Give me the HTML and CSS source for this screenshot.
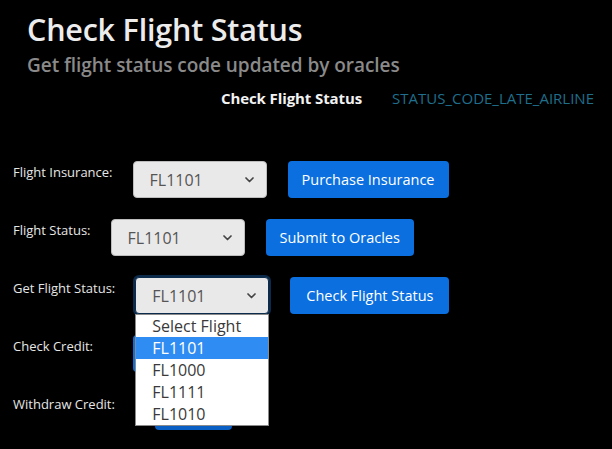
FILE: index.html
```html
<!DOCTYPE html>
<html lang="en">
<head>
<meta charset="utf-8">
<title>Check Flight Status</title>
<link rel="stylesheet" href="styles.css">
</head>
<body>
<div class="page">
  <h1 class="title">Check Flight Status</h1>
  <h2 class="subtitle">Get flight status code updated by oracles</h2>
  <div class="status-line">
    <span class="status-label">Check Flight Status</span>
    <span class="status-code">STATUS_CODE_LATE_AIRLINE</span>
  </div>
  <div class="form">
    <div class="row">
      <span class="label">Flight Insurance:</span>
      <div class="select"><span class="select-text">FL1101</span><svg class="chev" width="9" height="6" viewBox="0 0 9 6"><path d="M1 1 L4.5 4.5 L8 1" fill="none" stroke="#444" stroke-width="1.7" stroke-linecap="round" stroke-linejoin="round"/></svg></div>
      <button class="btn">Purchase Insurance</button>
    </div>
    <div class="row">
      <span class="label">Flight Status:</span>
      <div class="select"><span class="select-text">FL1101</span><svg class="chev" width="9" height="6" viewBox="0 0 9 6"><path d="M1 1 L4.5 4.5 L8 1" fill="none" stroke="#444" stroke-width="1.7" stroke-linecap="round" stroke-linejoin="round"/></svg></div>
      <button class="btn">Submit to Oracles</button>
    </div>
    <div class="row">
      <span class="label">Get Flight Status:</span>
      <div class="select-wrap">
        <div class="select focused"><span class="select-text">FL1101</span><svg class="chev" width="9" height="6" viewBox="0 0 9 6"><path d="M1 1 L4.5 4.5 L8 1" fill="none" stroke="#444" stroke-width="1.7" stroke-linecap="round" stroke-linejoin="round"/></svg></div>
        <ul class="dropdown">
          <li class="opt">Select Flight</li>
          <li class="opt active">FL1101</li>
          <li class="opt">FL1000</li>
          <li class="opt">FL1111</li>
          <li class="opt">FL1010</li>
        </ul>
      </div>
      <button class="btn btn-wide">Check Flight Status</button>
    </div>
    <div class="row">
      <span class="label">Check Credit:</span>
      <button class="btn btn-spaced btn-credit" aria-label="Check Credit"></button>
    </div>
    <div class="row">
      <span class="label">Withdraw Credit:</span>
      <button class="btn btn-spaced btn-withdraw" aria-label="Withdraw Credit"></button>
    </div>
  </div>
</div>
</body>
</html>
```

FILE: styles.css
```css
* { box-sizing: border-box; }
html, body {
  margin: 0;
  padding: 0;
  background: #000;
}
body {
  font-family: "Open Sans", "Noto Sans", "Liberation Sans", sans-serif;
  color: #e0e0e0;
}
.page {
  padding: 9px 18px 0 27px;
}
.title {
  margin: 0;
  font-size: 30.5px;
  line-height: 40px;
  font-weight: 600;
  color: #ececec;
  letter-spacing: -0.2px;
}
.subtitle {
  margin: 4px 0 0 0;
  font-size: 19px;
  line-height: 24px;
  font-weight: 600;
  color: #8a8a8a;
  letter-spacing: -0.05px;
}
.status-line {
  display: flex;
  justify-content: flex-end;
  gap: 30px;
  margin-top: 11px;
  font-size: 15px;
  line-height: 20px;
}
.status-label {
  font-weight: 700;
  color: #f2f2f2;
  letter-spacing: -0.1px;
}
.status-code {
  color: #1f6e8c;
}
.form {
  margin: 53px 0 0 -14px;
  display: flex;
  flex-direction: column;
  gap: 21px;
}
.row {
  display: flex;
  align-items: flex-start;
  height: 37px;
}
.label {
  font-size: 13px;
  line-height: 18px;
  margin-top: 2px;
  margin-right: 20px;
  color: #e6e6e6;
}
.select-wrap {
  position: relative;
}
.select {
  width: 134px;
  height: 37px;
  background: #e9e9e9;
  border: 1px solid #bdbdbd;
  border-radius: 4px;
  display: flex;
  align-items: center;
  justify-content: space-between;
  padding: 1px 12px 0 16px;
  margin-right: 21px;
}
.select.focused {
  border-color: #0c2c4e;
  box-shadow: 0 0 0 2px #0c2a4a;
}
.select-text {
  font-size: 16px;
  color: #555;
}
.chev {
  display: block;
}
.btn {
  height: 37px;
  padding: 0 14px;
  border: none;
  border-radius: 4px;
  background: #0b6fe0;
  color: #fff;
  font-family: inherit;
  font-size: 14.5px;
}
.btn-wide {
  padding: 0 16px;
}
.btn-spaced {
  margin-left: 20px;
}
.btn-credit {
  width: 110px;
}
.btn-withdraw {
  width: 77px;
  background: #0a5fc4;
}
.dropdown {
  position: absolute;
  top: 37px;
  left: 0;
  width: 134px;
  margin: 0;
  padding: 0;
  list-style: none;
  background: #fff;
  border: 1px solid #8a8a8a;
  z-index: 5;
}
.opt {
  height: 22px;
  line-height: 22px;
  padding-left: 16px;
  font-size: 16px;
  color: #3a3a3a;
}
.opt.active {
  background: #2f8cf2;
  color: #fff;
}
```
